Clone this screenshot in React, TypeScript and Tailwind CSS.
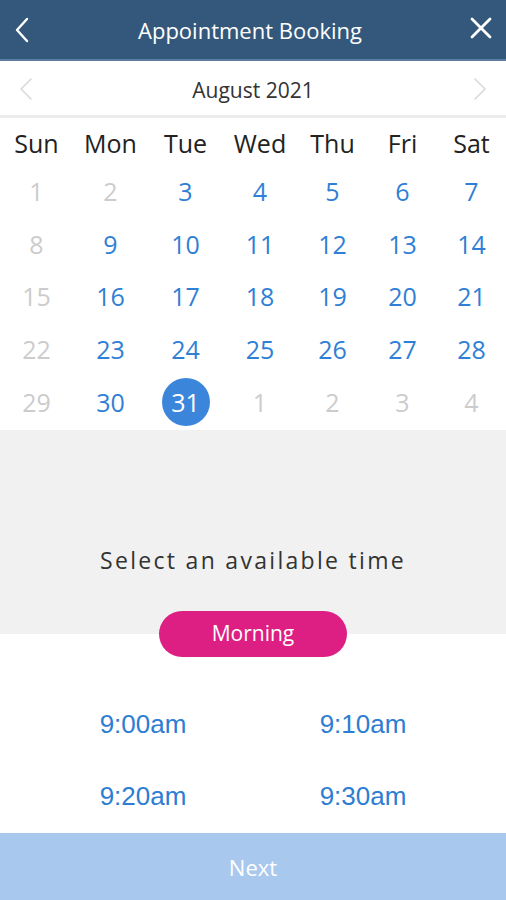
import React from "react";

const font = { fontFamily: '"Open Sans", "Noto Sans", sans-serif' };

type Day = { n: number; active: boolean; selected?: boolean };

const rows: Day[][] = [
  [1, 2, 3, 4, 5, 6, 7].map((n) => ({ n, active: n >= 3 })),
  [8, 9, 10, 11, 12, 13, 14].map((n) => ({ n, active: n >= 9 })),
  [15, 16, 17, 18, 19, 20, 21].map((n) => ({ n, active: n >= 16 })),
  [22, 23, 24, 25, 26, 27, 28].map((n) => ({ n, active: n >= 23 })),
  [
    { n: 29, active: false },
    { n: 30, active: true },
    { n: 31, active: true, selected: true },
    { n: 1, active: false },
    { n: 2, active: false },
    { n: 3, active: false },
    { n: 4, active: false },
  ],
];

const names = ["Sun", "Mon", "Tue", "Wed", "Thu", "Fri", "Sat"];

export default function App() {
  return (
    <div className="w-[506px] h-[900px] bg-white flex flex-col overflow-hidden" style={font}>
      {/* Header */}
      <div className="h-[59px] bg-[#34587c] flex items-center justify-between px-[13px] text-white">
        <svg width="18" height="26" viewBox="0 0 18 26" fill="none">
          <path d="M14 2 L4 13 L14 24" stroke="white" strokeWidth="2.4" strokeLinecap="round" strokeLinejoin="round" />
        </svg>
        <div className="text-[22px] leading-none mt-[1px]">Appointment Booking</div>
        <svg width="24" height="24" viewBox="0 0 24 24" fill="none" className="-mt-[4px]">
          <path d="M3 3 L21 21 M21 3 L3 21" stroke="white" strokeWidth="2.8" strokeLinecap="round" />
        </svg>
      </div>
      <div className="h-[2px] bg-[#5b7ea2]" />

      {/* Month */}
      <div className="h-[57px] flex items-center justify-between px-[19px] border-b-[3px] border-[#ececec]">
        <svg width="14" height="22" viewBox="0 0 14 22" fill="none" className="mt-[2px]">
          <path d="M12 1 L2 11 L12 21" stroke="#d9d9d9" strokeWidth="1.6" strokeLinecap="round" strokeLinejoin="round" />
        </svg>
        <div className="text-[21px] leading-none text-[#333333] mt-[4px]">August 2021</div>
        <svg width="14" height="22" viewBox="0 0 14 22" fill="none" className="mt-[2px]">
          <path d="M2 1 L12 11 L2 21" stroke="#d9d9d9" strokeWidth="1.6" strokeLinecap="round" strokeLinejoin="round" />
        </svg>
      </div>

      {/* Calendar */}
      <div className="pt-[3px] grid grid-cols-[73px_75px_75px_74px_71px_69px_69px]">
        {names.map((d) => (
          <div key={d} className="h-[44px] flex items-center justify-center text-[25px] leading-none text-[#222222]">
            {d}
          </div>
        ))}
        {rows.flat().map((d, i) => (
          <div key={i} className="h-[52.75px] flex items-center justify-center">
            {d.selected ? (
              <div className="w-[48px] h-[48px] rounded-full bg-[#3b86da] flex items-center justify-center text-white text-[25px] leading-none">
                {d.n}
              </div>
            ) : (
              <span className={"text-[25px] leading-none " + (d.active ? "text-[#2f7fd6]" : "text-[#cccccc]")}>
                {d.n}
              </span>
            )}
          </div>
        ))}
      </div>

      {/* Gray section */}
      <div className="mt-[1px] h-[204px] bg-[#f1f1f1] flex flex-col items-center justify-end">
        <div className="text-[23px] leading-none tracking-[2.3px] text-[#333333] mb-[39px]">Select an available time</div>
        <div className="relative -mb-[23px] w-[188px] h-[46px] rounded-full bg-[#dd1e82] flex items-center justify-center text-white text-[21px] leading-none">
          Morning
        </div>
      </div>

      {/* Times */}
      <div
        className="mt-[54px] grid grid-cols-2 px-[33px] text-[#2d7dd3] text-[26px] leading-none"
        style={{ fontFamily: '"Liberation Sans", Arial, sans-serif' }}
      >
        {["9:00am", "9:10am", "9:20am", "9:30am"].map((t) => (
          <div key={t} className="h-[72px] flex items-center justify-center">
            {t}
          </div>
        ))}
      </div>

      <div className="flex-1" />
      {/* Next */}
      <div className="h-[67px] bg-[#a8c8ee] flex items-center justify-center text-white text-[22px] leading-none">
        Next
      </div>
    </div>
  );
}
